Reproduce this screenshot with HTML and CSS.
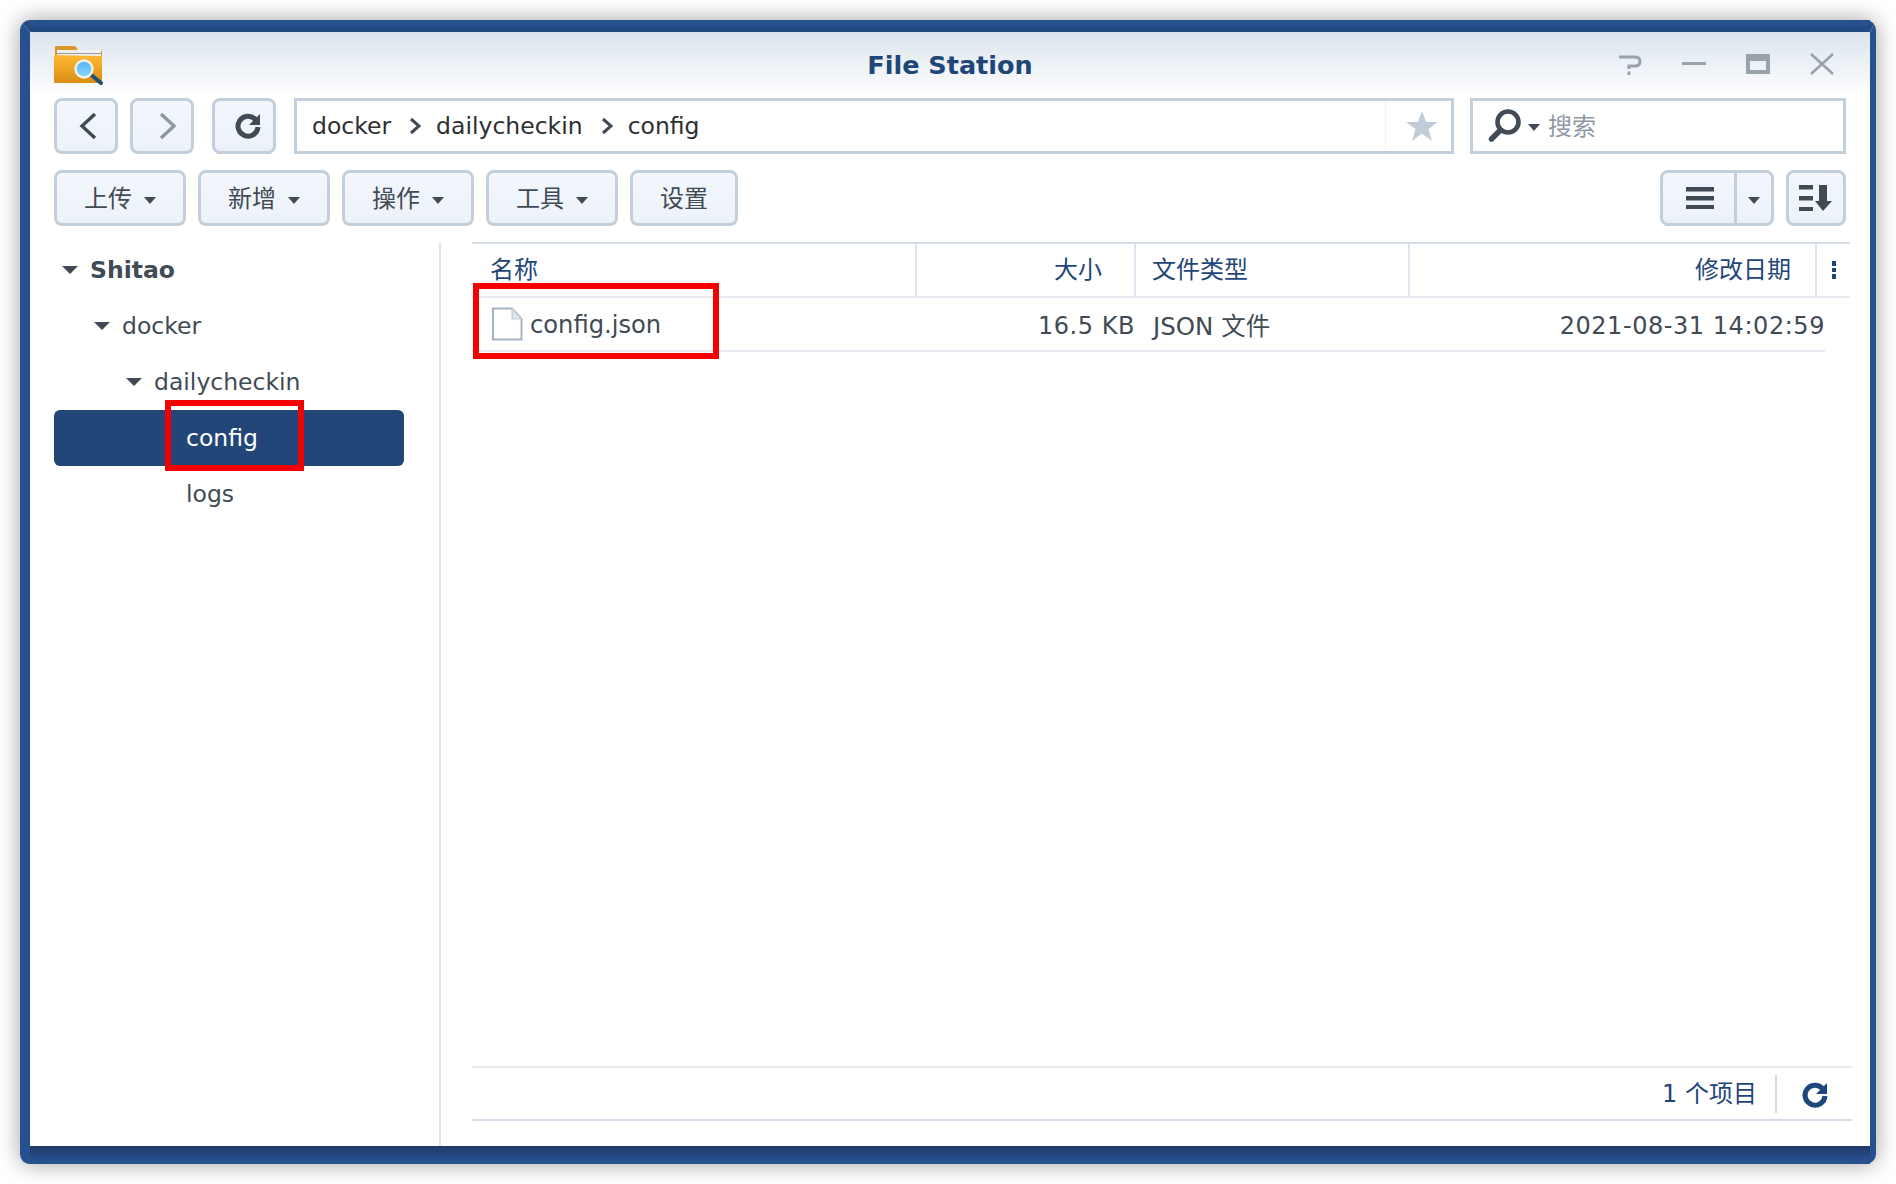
FILE: index.html
```html
<!DOCTYPE html>
<html lang="zh">
<head>
<meta charset="utf-8">
<title>File Station</title>
<link rel="stylesheet" href="styles.css">
</head>
<body>
<div class="window">
  <header class="titlebar">
    <svg class="app-icon" width="50" height="42" viewBox="0 0 50 42">
      <defs>
        <linearGradient id="fold" x1="0" y1="0" x2="0" y2="1"><stop offset="0" stop-color="#ffb933"/><stop offset="1" stop-color="#d98e14"/></linearGradient>
        <linearGradient id="lens" x1="0" y1="0" x2="0" y2="1"><stop offset="0" stop-color="#4fb4f2"/><stop offset="1" stop-color="#8fd6ff"/></linearGradient>
      </defs>
      <path d="M1 9V3q0-1 1-1h18q1 0 2 1l2 3h23q1 0 1 1v6H1z" fill="#d9962a"/>
      <rect x="3" y="6" width="44" height="8" fill="#eef0f2"/>
      <rect x="3" y="9" width="44" height="1" fill="#9a9a9a"/>
      <path d="M0 12q0-1 1-1l46 1q1 0 1 1v25q0 1-1 1H1q-1 0-1-1z" fill="url(#fold)"/>
      <path d="M36 30l11 9" stroke="#1f4e7a" stroke-width="4" stroke-linecap="round"/>
      <circle cx="30" cy="25" r="8.5" fill="url(#lens)" stroke="#f4f2e4" stroke-width="2.4"/>
    </svg>
    <h1 class="title">File Station</h1>
    <div class="win-controls">
      <svg width="24" height="24" viewBox="0 0 24 24"><path d="M1 5H17Q22 5 22 9.5T17 14H11V17M11 19.5V23" fill="none" stroke="#98a2ab" stroke-width="3"/></svg>
      <svg width="24" height="24" viewBox="0 0 24 24"><rect y="10" width="24" height="3" fill="#98a2ab"/></svg>
      <svg width="24" height="24" viewBox="0 0 24 24"><path d="M0 2H24V22H0ZM4 9V18H20V9Z" fill="#98a2ab" fill-rule="evenodd"/></svg>
      <svg width="24" height="24" viewBox="0 0 24 24"><path d="M1 2L23 22M23 2L1 22" stroke="#98a2ab" stroke-width="2.6"/></svg>
    </div>
  </header>

  <div class="navbar">
    <button class="btn nav-btn back"><svg width="20" height="28" viewBox="0 0 20 28"><path d="M16 2L3 14L16 26" fill="none" stroke="#414b55" stroke-width="3.4"/></svg></button>
    <button class="btn nav-btn fwd"><svg width="20" height="28" viewBox="0 0 20 28"><path d="M4 2L17 14L4 26" fill="none" stroke="#8e98a4" stroke-width="3.4"/></svg></button>
    <button class="btn nav-btn refresh"><svg width="28" height="28" viewBox="0 0 28 28"><path d="M21.5 7.5A10 10 0 1 0 24 15" fill="none" stroke="#414b55" stroke-width="5"/><path d="M26 2V13H15Z" fill="#414b55"/></svg></button>
    <div class="path-field">
      <div class="crumbs">
        <span>docker</span>
        <svg class="crumb-sep" width="12" height="18" viewBox="0 0 12 18"><path d="M2 2L10 9L2 16" fill="none" stroke="#414b55" stroke-width="3"/></svg>
        <span>dailycheckin</span>
        <svg class="crumb-sep" width="12" height="18" viewBox="0 0 12 18"><path d="M2 2L10 9L2 16" fill="none" stroke="#414b55" stroke-width="3"/></svg>
        <span>config</span>
      </div>
      <div class="star-box"><svg width="32" height="30" viewBox="0 0 32 30"><path d="M16 0L20 11H32L22.500 18L26 30L16 22.500L6 30L9.500 18L0 11H12Z" fill="#c0ccd8"/></svg></div>
    </div>
    <div class="search-field">
      <svg width="34" height="34" viewBox="0 0 34 34"><circle cx="20" cy="13" r="10.500" fill="none" stroke="#414b55" stroke-width="4.600"/><path d="M12.500 21L3.500 30" stroke="#414b55" stroke-width="5.500" stroke-linecap="round"/></svg>
      <i class="caret search-caret"></i>
      <span class="placeholder">搜索</span>
    </div>
  </div>

  <div class="toolbar">
    <button class="btn tool-btn">上传<i class="caret"></i></button>
    <button class="btn tool-btn">新增<i class="caret"></i></button>
    <button class="btn tool-btn">操作<i class="caret"></i></button>
    <button class="btn tool-btn">工具<i class="caret"></i></button>
    <button class="btn tool-btn plain">设置</button>
    <div class="tool-right">
      <div class="btn view-group">
        <span class="view-main"><svg width="28" height="22" viewBox="0 0 28 22"><path d="M0 0H28V4.500H0ZM0 9H28V13.500H0ZM0 18H28V22H0Z" fill="#414b55"/></svg></span>
        <span class="view-drop"><i class="caret"></i></span>
      </div>
      <button class="btn sort-btn"><svg width="34" height="28" viewBox="0 0 34 28"><path d="M0 1H14V5.500H0ZM0 12H14V16.500H0ZM0 23H14V27H0ZM20 1H28V17H33L24 27L16 17H20Z" fill="#414b55"/></svg></button>
    </div>
  </div>

  <div class="content">
    <aside class="sidebar">
      <div class="tree-row bold"><i class="tree-caret"></i>Shitao</div>
      <div class="tree-row lvl1"><i class="tree-caret"></i>docker</div>
      <div class="tree-row lvl2"><i class="tree-caret"></i>dailycheckin</div>
      <div class="tree-row lvl3 selected">config</div>
      <div class="tree-row lvl3">logs</div>
    </aside>
    <main class="main">
      <div class="list">
        <div class="list-head">
          <div class="col first">名称</div>
          <div class="col right size">大小</div>
          <div class="col third">文件类型</div>
          <div class="col right date">修改日期</div>
          <div class="col kebab"><i></i><i></i><i></i></div>
        </div>
        <div class="list-row">
          <div class="cell name">
            <svg width="32" height="34" viewBox="0 0 32 34"><path d="M2 1.500H21L30.500 12V32.500H2Z" fill="#fff" stroke="#a5b3c2" stroke-width="2"/><path d="M21 1.500V12H30.500Z" fill="#dfe5ec" stroke="#c0cbd6"/></svg>
            <span class="fname">config.json</span>
          </div>
          <div class="cell right num fsize">16.5 KB</div>
          <div class="cell type">JSON 文件</div>
          <div class="cell right num">2021-08-31 14:02:59</div>
        </div>
      </div>
      <footer class="status">
        <span class="count">1 个项目</span>
        <span class="status-sep"></span>
        <svg class="status-refresh" width="28" height="28" viewBox="0 0 28 28"><path d="M21.500 7.500A10 10 0 1 0 24 15" fill="none" stroke="#1f4678" stroke-width="5"/><path d="M26 2V13H15Z" fill="#1f4678"/></svg>
      </footer>
    </main>
  </div>

  <div class="mark mark-tree"></div>
  <div class="mark mark-file"></div>
</div>
</body>
</html>
```

FILE: styles.css
```css
* { box-sizing: border-box; }
html, body { margin: 0; padding: 0; background: #fff; }
body {
  width: 1896px;
  height: 1184px;
  padding: 20px;
  overflow: hidden;
  font-family: "DejaVu Sans", "Noto Sans CJK SC", sans-serif;
  font-size: 23.5px;
  color: #414b55;
}
.window {
  position: relative;
  width: 1856px;
  height: 1144px;
  background: #fff;
  border-style: solid;
  border-width: 12px 6px 18px 10px;
  border-color: #27508f;
  border-top-color: #234a80;
  border-radius: 10px;
  box-shadow: 0 0 22px rgba(0,0,0,.38);
  display: flex;
  flex-direction: column;
}
.window::before {
  content: "";
  position: absolute;
  left: 0;
  right: 0;
  top: -12px;
  height: 6px;
  background: #27508f;
}
.window::after {
  content: "";
  position: absolute;
  left: 0;
  right: 0;
  bottom: -18px;
  height: 18px;
  background: linear-gradient(#1f3a66, #27508f 80%);
}
.titlebar {
  height: 66px;
  flex: none;
  display: flex;
  align-items: center;
  justify-content: center;
  position: relative;
  background: linear-gradient(#dbe4ed, #ffffff);
}
.app-icon { position: absolute; left: 24px; top: 12px; }
.title {
  margin: 0;
  font-size: 25.5px;
  font-weight: bold;
  color: #1f4678;
}
.win-controls {
  position: absolute;
  right: 36px;
  top: 20px;
  display: flex;
  gap: 40px;
}
.win-controls svg { display: block; }

.btn {
  border: 3px solid #c3cfdb;
  border-radius: 8px;
  background: linear-gradient(#f3f7fd, #edf2f9);
  height: 56px;
  padding: 0;
  font: inherit;
  color: inherit;
  display: flex;
  align-items: center;
  justify-content: center;
}
.navbar {
  flex: none;
  height: 56px;
  padding: 0 24px;
  display: flex;
  gap: 12px;
}
.nav-btn { width: 64px; }
.nav-btn svg { display: block; }
.back { padding-left: 6px; }
.fwd { padding-left: 9px; }
.refresh { margin-left: 6px; padding-left: 8px; }
.path-field {
  margin-left: 6px;
  width: 1160px;
  border: 3px solid #c3cfdb;
  display: flex;
  align-items: center;
  justify-content: space-between;
  color: #2d2f33;
  padding-left: 15px;
}
.crumbs { display: flex; align-items: center; }
.crumb-sep { margin: 0 15px 0 18px; }
.star-box {
  width: 66px;
  height: 50px;
  padding-left: 7px;
  display: flex;
  align-items: center;
  justify-content: center;
  border-left: 1px solid #eef1f5;
}
.search-field {
  margin-left: 4px;
  width: 376px;
  border: 3px solid #c3cfdb;
  display: flex;
  align-items: center;
  padding-left: 15px;
  color: #8f99a5;
}
.search-caret { margin: 2px 8px 0 6px; }
.placeholder { font-size: 24px; padding-bottom: 4px; }

.caret {
  display: inline-block;
  width: 0;
  height: 0;
  border-style: solid;
  border-width: 7px 6px 0 6px;
  border-color: #414b55 transparent transparent transparent;
}
.toolbar {
  flex: none;
  height: 56px;
  margin-top: 16px;
  padding: 0 24px;
  display: flex;
  gap: 12px;
}
.tool-btn { width: 132px; font-size: 24px; gap: 12px; padding-bottom: 4px; }
.tool-btn .caret { margin-top: 9px; }
.tool-btn.plain { width: 108px; }
.tool-right { margin-left: auto; display: flex; gap: 12px; }
.view-group { width: 114px; align-items: stretch; }
.view-main { width: 74px; padding-left: 2px; display: flex; align-items: center; justify-content: center; border-right: 3px solid #c3cfdb; }
.view-drop { flex: 1; display: flex; align-items: center; justify-content: center; }
.view-drop .caret { margin-top: 5px; }
.sort-btn { width: 60px; }
.sort-btn svg { display: block; }

.content {
  flex: 1;
  min-height: 0;
  margin-top: 16px;
  display: flex;
}
.sidebar {
  width: 411px;
  flex: none;
  border-right: 2px solid #e1e4e8;
  padding-left: 24px;
  padding-right: 35px;
}
.tree-row {
  height: 56px;
  display: flex;
  align-items: center;
  padding-left: 8px;
}
.bold { font-weight: bold; }
.tree-caret {
  width: 0;
  height: 0;
  margin-right: 12px;
  border-style: solid;
  border-width: 8px 8px 0 8px;
  border-color: #414b55 transparent transparent transparent;
}
.lvl1 { padding-left: 40px; }
.lvl2 { padding-left: 72px; }
.lvl3 { padding-left: 132px; }
.selected { background: #234678; color: #fff; border-radius: 6px; }

.main {
  flex: 1;
  min-width: 0;
  margin-left: 31px;
  padding-right: 18px;
  padding-bottom: 25px;
  display: flex;
  flex-direction: column;
}
.list { flex: 1; min-height: 0; }
.list-head {
  margin-right: 2px;
  height: 56px;
  border-top: 2px solid #d3dde9;
  border-bottom: 2px solid #e6ebf1;
  display: grid;
  grid-template-columns: 445px 219px 274px 407px 33px;
  color: #1f4678;
  font-size: 24px;
}
.col {
  display: flex;
  align-items: center;
  padding: 0 17px 6px;
  border-right: 2px solid #dce6f1;
}
.col.first { padding-left: 18px; }
.col.third { padding-left: 16px; }
.col.right { justify-content: flex-end; }
.col.size { padding-right: 32px; }
.col.date { padding-right: 24px; }
.col.kebab { border: 0; padding: 0; flex-direction: column; justify-content: center; gap: 2px; }
.kebab i { width: 4px; height: 4.500px; background: #1f4678; }
.list-row {
  height: 54px;
  border-bottom: 2px solid #e6ebf1;
  display: grid;
  grid-template-columns: 445px 219px 274px 415px;
  width: 1353px;
  align-items: center;
}
.cell { display: flex; align-items: center; }
.cell.name { padding-left: 19px; gap: 7px; }
.fname { font-size: 24.2px; padding-top: 1px; }
.cell.right { justify-content: flex-end; }
.cell.type { padding-left: 17px; font-size: 24.5px; }
.num { font-size: 24px; letter-spacing: .55px; padding-top: 3px; }
.fsize { padding-right: 1px; }
.status {
  flex: none;
  height: 55px;
  border-top: 2px solid #e6ebf1;
  border-bottom: 2px solid #d3dde9;
  display: flex;
  align-items: center;
  justify-content: flex-end;
  padding-right: 23px;
  color: #1f4678;
}
.count { font-size: 24px; padding-bottom: 4px; }
.status-sep { width: 2px; height: 38px; background: #d3dde9; margin: 0 24px 0 18px; }
.status-refresh { margin-top: 3px; }

.mark { position: absolute; border: 6px solid #f50000; z-index: 1; }
.mark-tree { left: 135px; top: 368px; width: 139px; height: 71px; }
.mark-file { left: 443px; top: 251px; width: 246px; height: 76px; }
```
